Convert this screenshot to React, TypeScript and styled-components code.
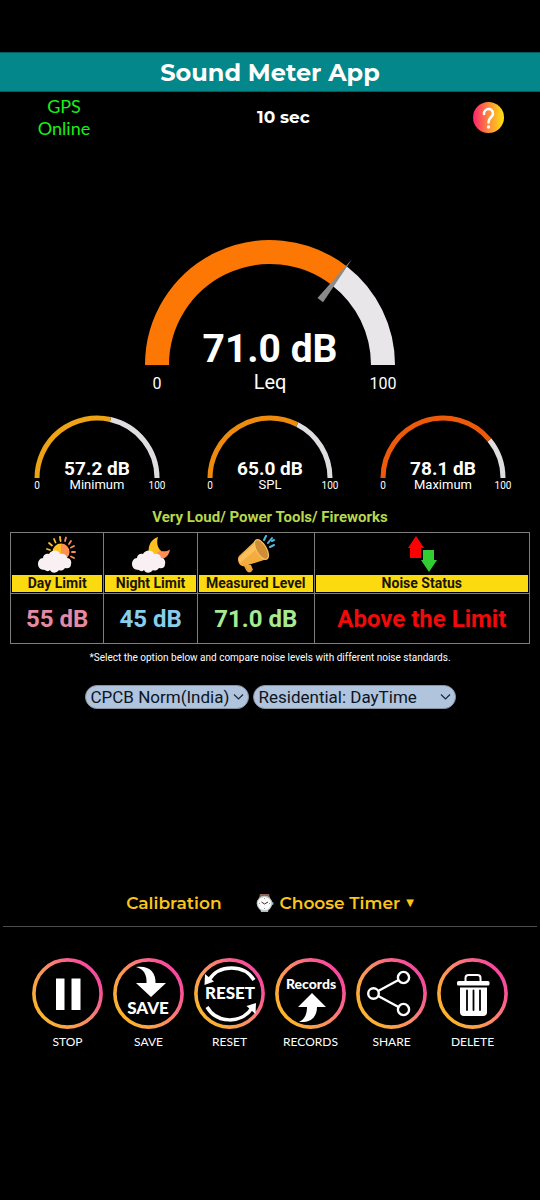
import React from 'react';
import styled, { createGlobalStyle } from 'styled-components';

const GlobalStyle = createGlobalStyle`
  * { box-sizing: border-box; }
  body {
    margin: 0;
    background: #000;
    color: #fff;
    font-family: Roboto, "Liberation Sans", sans-serif;
  }
  button, select { font: inherit; color: inherit; }
`;

const display = 'Montserrat, Inter, "Open Sans", sans-serif';
const label = 'Lato, "Open Sans", sans-serif';

const Page = styled.main`
  min-height: 100vh;
  padding-top: 52px;
  display: flex;
  flex-direction: column;
`;

const TitleBar = styled.header`
  background: #03878a;
  border: solid #045b5e;
  border-width: 1px 0;
  height: 40px;
  display: flex;
  align-items: center;
  justify-content: center;
`;

const Title = styled.h1`
  margin: 0;
  padding-top: 2px;
  font: 700 24px/32px ${display};
`;

const StatusRow = styled.div`
  display: flex;
  justify-content: space-between;
  align-items: center;
  padding: 3px 36px 0 34px;
`;

const GpsStatus = styled.div`
  width: 60px;
  text-align: center;
  color: #18f018;
  font: 400 18px/22px ${label};
`;

const Elapsed = styled.div`
  text-align: center;
  font: 700 17px/22px ${display};
`;

const HelpButton = styled.button`
  width: 31px;
  height: 31px;
  padding: 0;
  border: 0;
  border-radius: 50%;
  background: linear-gradient(90deg, #ff2070, #ff8a3a 50%, #ffe410);
  display: flex;
  align-items: center;
  justify-content: center;
  cursor: pointer;
`;

const MainGauge = styled.section`
  display: flex;
  justify-content: center;
  margin-top: 95px;
`;

const GaugeRow = styled.section`
  display: grid;
  grid-template-columns: repeat(3, 1fr);
  justify-items: center;
  margin: 20px 10px 0;
`;

const GaugeSvg = styled.svg`
  display: block;
  font-family: Roboto, "Liberation Sans", sans-serif;
`;

const Verdict = styled.p`
  margin: 13px 0 5px;
  text-align: center;
  color: #b7d84b;
  font-weight: 700;
  font-size: 15px;
  line-height: 20px;
`;

const LimitTable = styled.table`
  margin: 0 10px;
  width: calc(100% - 20px);
  table-layout: fixed;
  border-collapse: collapse;
`;

const Col = styled.col<{ $share: number }>`
  width: ${p => p.$share}%;
`;

const HeadCell = styled.th`
  border: 1px solid #7d7d7d;
  padding: 2px 1px 1px;
  font-size: 14px;
  line-height: 17px;
`;

const HeadIcon = styled.div`
  height: 40px;
  display: flex;
  justify-content: center;
`;

const HeadLabel = styled.div`
  background: #fbdb10;
  color: #1a1400;
  white-space: nowrap;
`;

const ValueCell = styled.td<{ $color: string }>`
  border: 1px solid #7d7d7d;
  padding: 0;
  height: 50px;
  text-align: center;
  font-weight: 700;
  font-size: 24px;
  white-space: nowrap;
  color: ${p => p.$color};
`;

const Hint = styled.p`
  margin: 7px 0 0;
  text-align: center;
  font-size: 10px;
  line-height: 14px;
`;

const Selectors = styled.div`
  display: flex;
  justify-content: center;
  gap: 4px;
  margin-top: 20px;
`;

const SelectWrap = styled.label<{ $width: number }>`
  position: relative;
  display: block;
  width: ${p => p.$width}px;
`;

const Picker = styled.select`
  appearance: none;
  display: block;
  width: 100%;
  height: 24px;
  padding: 0 18px 0 5px;
  border: 1px solid #8a919c;
  border-radius: 12px;
  background: #b0c4de;
  color: #0c1522;
  font-size: 17px;
  line-height: 22px;
`;

const Chevron = styled.svg`
  position: absolute;
  right: 5px;
  top: 8px;
  pointer-events: none;
`;

const Tools = styled.div`
  display: flex;
  justify-content: center;
  gap: 34px;
  margin: 180px 3px 0;
  padding-bottom: 9px;
  border-bottom: 1px solid #4d4d4d;
`;

const ToolButton = styled.button`
  display: flex;
  align-items: center;
  gap: 6px;
  padding: 0;
  border: 0;
  background: none;
  color: #fcc419;
  font: 600 17px/28px ${display};
  white-space: nowrap;
  cursor: pointer;
`;

const Caret = styled.span`
  font: 10px/28px "DejaVu Sans", sans-serif;
`;

const Actions = styled.nav`
  display: flex;
  justify-content: center;
  gap: 9px;
  margin-top: 31px;
`;

const Action = styled.button`
  width: 72px;
  padding: 0;
  border: 0;
  background: none;
  color: #fff;
  display: flex;
  flex-direction: column;
  align-items: center;
  gap: 4px;
  font: 400 12px/16px ${label};
  cursor: pointer;
`;

const arcPoint = (cx: number, cy: number, r: number, value: number) => {
  const a = Math.PI * (1 - value / 100);
  return `${cx + r * Math.cos(a)} ${cy - r * Math.sin(a)}`;
};

const arc = (cx: number, cy: number, r: number, from: number, to: number) =>
  `M${arcPoint(cx, cy, r, from)} A${r} ${r} 0 0 1 ${arcPoint(cx, cy, r, to)}`;

function LargeGauge({ value, label }: { value: number; label: string }) {
  const angle = (value / 100) * 180 - 90;
  return (
    <GaugeSvg width="270" height="160" viewBox="0 0 270 160" role="img" aria-label={`${label} ${value.toFixed(1)} dB`}>
      <path d={arc(135, 131, 113, value, 100)} fill="none" stroke="#e9e6e9" strokeWidth="24" />
      <path d={arc(135, 131, 113, 0, value)} fill="none" stroke="#fc7703" strokeWidth="24" />
      <polygon points="131.5,49 135,-3 138.5,49" fill="#8b8b8b" transform={`rotate(${angle} 135 131)`} />
      <g fill="#fff" textAnchor="middle">
        <text x="135" y="128" fontSize="39" fontWeight="700">{value.toFixed(1)} dB</text>
        <text x="135" y="155" fontSize="20">{label}</text>
        <text x="22" y="155" fontSize="16">0</text>
        <text x="248" y="155" fontSize="16">100</text>
      </g>
    </GaugeSvg>
  );
}

function SmallGauge({ value, label, color }: { value: number; label: string; color: string }) {
  return (
    <GaugeSvg width="144" height="80" viewBox="0 0 144 80" role="img" aria-label={`${label} ${value.toFixed(1)} dB`}>
      <path d={arc(72, 64, 60, value, 100)} fill="none" stroke="#dfdde0" strokeWidth="5" />
      <path d={arc(72, 64, 60, 0, value)} fill="none" stroke={color} strokeWidth="5" />
      <g fill="#fff" textAnchor="middle">
        <text x="72" y="61" fontSize="19" fontWeight="700">{value.toFixed(1)} dB</text>
        <text x="72" y="75" fontSize="13">{label}</text>
        <text x="12" y="75" fontSize="10">0</text>
        <text x="132" y="75" fontSize="10">100</text>
      </g>
    </GaugeSvg>
  );
}

const cloudPath =
  'M7 35 C2 35 0 32 0 29 C0 26 2 23 5 23 C5 20 8 18 11 19 C13 15 20 14 22 19 C26 18 29 20 29 23 C32 23 34 26 33 29 C33 33 30 34 27 33 C25 36 22 36 21 35 C18 39 13 38 12 35 C10 37 8 36 7 35 Z';

const DayIcon = () => (
  <svg width="38" height="38" viewBox="0 0 38 38" aria-hidden="true">
    <defs>
      <linearGradient id="sun" x1="0" x2="1">
        <stop offset="0.5" stopColor="#ffc01e" />
        <stop offset="0.5" stopColor="#ff8f52" />
      </linearGradient>
    </defs>
    <g strokeWidth="1.8" strokeLinecap="round">
      <path d="M9 14 L12 15 M11 8 L14 10.500 M16 4 L17.500 7.500 M22 2 L22.500 6" stroke="#ffc01e" />
      <path d="M28 2.500 L27 6 M33 6 L31 9 M36 11 L33 12.500 M37 17 L34 17 M36 23 L33 21.500" stroke="#ff8f52" />
    </g>
    <circle cx="23" cy="17" r="8.500" fill="url(#sun)" />
    <path d={cloudPath} fill="#f8f0f3" />
  </svg>
);

const NightIcon = () => (
  <svg width="38" height="38" viewBox="0 0 38 38" aria-hidden="true">
    <path d="M26 2 C19 4 15.500 11 17 19 L27 26 L29 16 C25 12 24.500 7 26 2 Z" fill="#ffc01e" />
    <path d="M28 15.500 C31 17 35 16.500 38 14.500 C37.500 19 35 22 31 24 L26 25 L21 21 Z" fill="#ff8f52" />
    <path d={cloudPath} fill="#f8f0f3" />
  </svg>
);

const MegaphoneIcon = () => (
  <svg width="38" height="38" viewBox="0 0 38 38" aria-hidden="true">
    <path d="M9 28 L15 36 L14 37 C12 38 10 37 9 35 L6 29 Z" fill="#efa035" />
    <path d="M9 30 L14 30 L16 35 L12 37 Z" fill="#f2a73b" />
    <path d="M19 5 L2 21 C-1 25 3 33 8 31 L30 24 Z" fill="#f4ac3f" />
    <path d="M17 9 L3 22 C1 24 2 26 3 28 L20 14 Z" fill="#fac05a" />
    <ellipse cx="24.500" cy="14.500" rx="5" ry="11" transform="rotate(-30 24.500 14.500)" fill="#cf8d35" stroke="#ffc05c" strokeWidth="1.200" />
    <g stroke="#4fb9e3" strokeWidth="2" strokeLinecap="round">
      <path d="M27 5 L29 1 M31 8 L35 3 M33 12 L37 10" />
      <path d="M35 6 L37 5" />
    </g>
  </svg>
);

const StatusIcon = () => (
  <svg width="30" height="38" viewBox="0 0 30 38" aria-hidden="true">
    <path d="M9 1 L17 13 H14 V23 H3 V13 H1 Z" fill="#f00" />
    <path d="M16 15 H27 V25 H30 L22 37 L14 25 H16 Z" fill="#32cd32" />
  </svg>
);

const WatchIcon = () => (
  <svg width="18" height="20" viewBox="0 0 18 20" aria-hidden="true">
    <path d="M4 1 H13 L14 5 H3 Z" fill="#8d6250" />
    <path d="M4 15 H13 L12 19 H5 Z" fill="#b9bcbc" />
    <rect x="15" y="9" width="2.500" height="3" rx="1" fill="#88a7a7" />
    <circle cx="8.500" cy="10.500" r="7.800" fill="#b9c9c9" />
    <circle cx="8.500" cy="10.500" r="6.600" fill="#fafafa" />
    <path d="M5.500 9 L8.500 11 L12 9" fill="none" stroke="#333" strokeWidth="1" />
    <path d="M8.500 5 V6 M8.500 15 V16 M3 10.500 H4 M13 10.500 H14" stroke="#999" />
  </svg>
);

const Ring = ({ children }: { children: React.ReactNode }) => (
  <svg width="72" height="72" viewBox="0 0 72 72" aria-hidden="true" fontFamily="Lato, sans-serif" fontWeight="900">
    <defs>
      <linearGradient id="ring" x1="0.100" y1="0.800" x2="0.900" y2="0.200">
        <stop offset="0" stopColor="#fcb32c" />
        <stop offset="0.500" stopColor="#fb8a68" />
        <stop offset="1" stopColor="#f9489f" />
      </linearGradient>
    </defs>
    <circle cx="35.500" cy="35.500" r="33.600" fill="none" stroke="url(#ring)" strokeWidth="3.600" />
    {children}
  </svg>
);

const actions: { name: string; icon: React.ReactNode }[] = [
  {
    name: 'STOP',
    icon: <path d="M24 20.500 H32.500 V52 H24 Z M39.500 20.500 H48.500 V52 H39.500 Z" fill="#fff" />,
  },
  {
    name: 'SAVE',
    icon: (
      <g fill="#fff">
        <path d="M23 9 C36 7 43 14 42.500 25 H53 L38 39 L23 25 H33.500 C34 17 31 11 23 9 Z" />
        <text x="35" y="56" fontSize="17" textAnchor="middle">SAVE</text>
      </g>
    ),
  },
  {
    name: 'RESET',
    icon: (
      <g fill="#fff">
        <path d="M60 22 C50 6 25 6 15 22" fill="none" stroke="#fff" strokeWidth="3.500" />
        <path d="M11 16 L10.500 27 L20 23.500 Z" />
        <path d="M13 49 C23 66 48 66 58 50" fill="none" stroke="#fff" strokeWidth="3.500" />
        <path d="M62 45 L61.500 56 L52.500 48 Z" />
        <text x="36" y="41" fontSize="17" textAnchor="middle">RESET</text>
      </g>
    ),
  },
  {
    name: 'RECORDS',
    icon: (
      <g fill="#fff">
        <text x="36" y="31" fontSize="14" textAnchor="middle">Records</text>
        <path d="M37 35 L51 49 H42 C42 59 36 65 24 64 C30 61 32 56 32 49 H23 Z" />
      </g>
    ),
  },
  {
    name: 'SHARE',
    icon: (
      <g fill="none" stroke="#fff" strokeWidth="2.400">
        <circle cx="17.500" cy="35.500" r="5.300" />
        <circle cx="47.500" cy="19.500" r="5.600" />
        <circle cx="47.500" cy="51.500" r="5.600" />
        <path d="M22.200 33 L42.500 22 M22.200 38 L42.500 49" />
      </g>
    ),
  },
  {
    name: 'DELETE',
    icon: (
      <g>
        <path d="M28.500 23 V20 Q28.500 17 31.500 17 H40.500 Q43.500 17 43.500 20 V23" fill="none" stroke="#fff" strokeWidth="2" />
        <rect x="20" y="23" width="32.500" height="4.500" rx="1.500" fill="#fff" />
        <path d="M23 29.500 H50 V54 Q50 58 46 58 H27 Q23 58 23 54 Z" fill="#fff" />
        <path d="M30 32.500 V52 M36.500 32.500 V52 M43 32.500 V52" stroke="#000" strokeWidth="1.800" strokeLinecap="round" />
      </g>
    ),
  },
];

const limits = [
  { label: 'Day Limit', value: '55 dB', color: '#e58aa4', share: 18, icon: <DayIcon /> },
  { label: 'Night Limit', value: '45 dB', color: '#87ceeb', share: 18, icon: <NightIcon /> },
  { label: 'Measured Level', value: '71.0 dB', color: '#a6ea92', share: 22.5, icon: <MegaphoneIcon /> },
  { label: 'Noise Status', value: 'Above the Limit', color: '#f00a0a', share: 41.5, icon: <StatusIcon /> },
];

function Dropdown({ label, options, width }: { label: string; options: string[]; width: number }) {
  return (
    <SelectWrap $width={width}>
      <Picker aria-label={label}>
        {options.map(o => <option key={o}>{o}</option>)}
      </Picker>
      <Chevron width="11" height="8" viewBox="0 0 11 8" aria-hidden="true">
        <path d="M1 1.500 L5.500 6 L10 1.500" fill="none" stroke="#1b2836" strokeWidth="1.200" />
      </Chevron>
    </SelectWrap>
  );
}

export default function App() {
  return (
    <>
      <GlobalStyle />
      <Page>
        <TitleBar><Title>Sound Meter App</Title></TitleBar>
        <StatusRow>
          <GpsStatus>GPS Online</GpsStatus>
          <Elapsed>10 sec</Elapsed>
          <HelpButton aria-label="Help">
            <svg width="31" height="31" viewBox="0 0 31 31" aria-hidden="true">
              <path d="M11 12 C11 5.500 20 5.500 20 11.500 C20 15.500 15.500 15 15.500 20.500" fill="none" stroke="#fff" strokeWidth="2.600" strokeLinecap="round" />
              <circle cx="15.500" cy="25" r="1.700" fill="#fff" />
            </svg>
          </HelpButton>
        </StatusRow>
        <MainGauge><LargeGauge value={71} label="Leq" /></MainGauge>
        <GaugeRow>
          <SmallGauge value={57.2} label="Minimum" color="#eda313" />
          <SmallGauge value={65} label="SPL" color="#ee8a0c" />
          <SmallGauge value={78.1} label="Maximum" color="#ee5a0a" />
        </GaugeRow>
        <Verdict>Very Loud/ Power Tools/ Fireworks</Verdict>
        <LimitTable>
          <colgroup>
            {limits.map(l => <Col key={l.label} $share={l.share} />)}
          </colgroup>
          <thead>
            <tr>
              {limits.map(l => (
                <HeadCell key={l.label} scope="col">
                  <HeadIcon>{l.icon}</HeadIcon>
                  <HeadLabel>{l.label}</HeadLabel>
                </HeadCell>
              ))}
            </tr>
          </thead>
          <tbody>
            <tr>
              {limits.map(l => <ValueCell key={l.label} $color={l.color}>{l.value}</ValueCell>)}
            </tr>
          </tbody>
        </LimitTable>
        <Hint>*Select the option below and compare noise levels with different noise standards.</Hint>
        <Selectors>
          <Dropdown label="Noise standard" options={['CPCB Norm(India)']} width={164} />
          <Dropdown label="Zone and time" options={['Residential: DayTime']} width={203} />
        </Selectors>
        <Tools>
          <ToolButton>Calibration</ToolButton>
          <ToolButton><WatchIcon />Choose Timer<Caret>▼</Caret></ToolButton>
        </Tools>
        <Actions>
          {actions.map(a => (
            <Action key={a.name}>
              <Ring>{a.icon}</Ring>
              {a.name}
            </Action>
          ))}
        </Actions>
      </Page>
    </>
  );
}
